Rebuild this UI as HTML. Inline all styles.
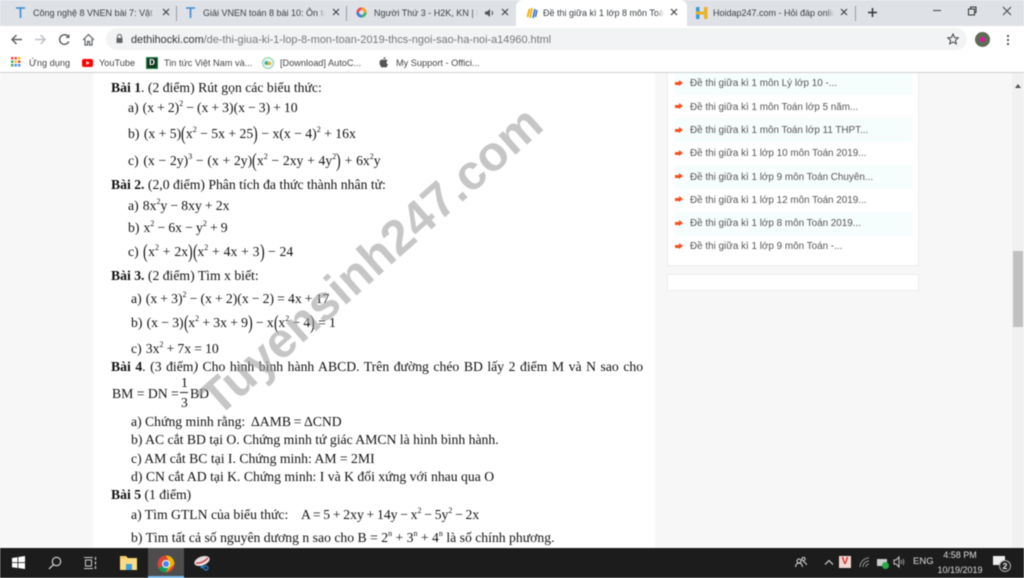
<!DOCTYPE html>
<html><head><meta charset="utf-8"><style>
html,body{margin:0;padding:0;width:1024px;height:578px;overflow:hidden;background:#fff}
#r{position:relative;width:1024px;height:578px;overflow:hidden;filter:blur(.4px);font-family:"Liberation Sans",sans-serif}
.a{position:absolute}
.t{position:absolute;white-space:nowrap;line-height:16px}
.tab{font-size:9px;color:#3c4043;top:5px;height:16px;overflow:hidden;-webkit-mask-image:linear-gradient(90deg,#000 94%,transparent)}
.x{position:absolute;top:8px}
.bm{font-size:9.2px;color:#444;top:55px}
.m{font-family:"Liberation Serif",serif;font-size:13.7px;color:#111;line-height:18px;position:absolute;white-space:nowrap}
.m sup{font-size:8px;line-height:0;vertical-align:6px}
.m i{font-style:normal;font-size:20px;line-height:0;font-weight:300;vertical-align:-2px;display:inline-block;transform:scaleX(.7);margin:0 -1px}
.m u{text-decoration:none;display:inline-block;width:1px}
.s{position:absolute;left:690px;font-size:9.9px;color:#555;white-space:nowrap;line-height:14px}
.ar{position:absolute;left:675px;width:5px;height:3px;background:#f4511e}
.ar:after{content:"";position:absolute;left:4px;top:-2px;border-left:4px solid #f4511e;border-top:3.5px solid transparent;border-bottom:3.5px solid transparent}
.st{position:absolute;left:675px;width:237px;height:24px;background:#f6fdfd}
</style></head><body><div id="r">

<div class="a" style="left:0;top:0;width:1024px;height:26px;background:#dee1e6"></div>
<div class="a" style="left:516px;top:0;width:171px;height:26px;background:#fff;border-radius:7px 7px 0 0"></div>

<svg class="a" style="left:15px;top:7px" width="11" height="11" viewBox="0 0 11 11"><path d="M1 1h9M5.500 1v10" stroke="#3b8bd0" stroke-width="1.600" fill="none"/></svg>
<span class="t tab" style="left:33px;width:122px">Công nghệ 8 VNEN bài 7: Vật lí</span>
<svg class="a x" style="left:162px" width="8" height="8" viewBox="0 0 8 8"><path d="M1 1l6 6M7 1l-6 6" stroke="#444" stroke-width="1.200"/></svg>
<div class="a" style="left:176px;top:6px;width:1px;height:15px;background:#9a9ea3"></div>
<svg class="a" style="left:185px;top:7px" width="11" height="11" viewBox="0 0 11 11"><path d="M1 1h9M5.500 1v10" stroke="#3b8bd0" stroke-width="1.600" fill="none"/></svg>
<span class="t tab" style="left:203px;width:122px">Giải VNEN toán 8 bài 10: Ôn tập</span>
<svg class="a x" style="left:332px" width="8" height="8" viewBox="0 0 8 8"><path d="M1 1l6 6M7 1l-6 6" stroke="#444" stroke-width="1.200"/></svg>
<div class="a" style="left:346px;top:6px;width:1px;height:15px;background:#9a9ea3"></div>
<svg class="a" style="left:356px;top:7px" width="11" height="11" viewBox="0 0 11 11"><circle cx="5.500" cy="5.500" r="3.800" fill="none" stroke="#e8475a" stroke-width="2.600"/><path d="M5.500 1.700a3.800 3.800 0 0 1 3.800 3.800" fill="none" stroke="#f4a62a" stroke-width="2.600"/><path d="M9.300 5.500a3.800 3.800 0 0 1-3.800 3.800" fill="none" stroke="#3fb56a" stroke-width="2.600"/><path d="M5.500 9.300a3.800 3.800 0 0 1-3.800-3.800" fill="none" stroke="#3a7be0" stroke-width="2.600"/></svg>
<span class="t tab" style="left:374px;width:104px">Người Thứ 3 - H2K, KN | Bá</span>
<svg class="a" style="left:484px;top:8px" width="11" height="10" viewBox="0 0 11 10"><path d="M1 3.500h2L6 1v8L3 6.500H1z" fill="#555"/><path d="M8 3q1 2 0 4" fill="none" stroke="#555"/></svg>
<svg class="a x" style="left:501px" width="8" height="8" viewBox="0 0 8 8"><path d="M1 1l6 6M7 1l-6 6" stroke="#444" stroke-width="1.200"/></svg>

<svg class="a" style="left:526px;top:7px" width="13" height="12" viewBox="0 0 13 12"><path d="M1.500 10L3.500 2" stroke="#f2a900" stroke-width="1.800"/><path d="M4 11L6 1" stroke="#f4b400" stroke-width="1.800"/><path d="M7 11L9 2" stroke="#3a7be0" stroke-width="1.800"/><path d="M9.500 10L11 3" stroke="#2e63c0" stroke-width="1.400"/></svg>
<span class="t tab" style="left:543px;width:121px">Đề thi giữa kì 1 lớp 8 môn Toán</span>
<svg class="a x" style="left:670px" width="8" height="8" viewBox="0 0 8 8"><path d="M1 1l6 6M7 1l-6 6" stroke="#444" stroke-width="1.200"/></svg>
<svg class="a" style="left:696px;top:7px" width="12" height="12" viewBox="0 0 12 12"><rect x="0" y="0" width="3.500" height="12" fill="#3a9bd8"/><rect x="8" y="0" width="3.500" height="12" fill="#e8b325"/><rect x="0" y="4.500" width="11" height="3" fill="#e8b325"/></svg>
<span class="t tab" style="left:713px;width:121px">Hoidap247.com - Hỏi đáp online</span>
<svg class="a x" style="left:840px" width="8" height="8" viewBox="0 0 8 8"><path d="M1 1l6 6M7 1l-6 6" stroke="#444" stroke-width="1.200"/></svg>
<div class="a" style="left:855px;top:6px;width:1px;height:15px;background:#9a9ea3"></div>
<svg class="a" style="left:867px;top:7px" width="11" height="11" viewBox="0 0 11 11"><path d="M5.500 1v9M1 5.500h9" stroke="#333" stroke-width="1.500"/></svg>
<div class="a" style="left:933px;top:10px;width:8px;height:1px;background:#444"></div>
<svg class="a" style="left:967px;top:6px" width="10" height="10" viewBox="0 0 10 10"><path d="M1.500 3h6v6h-6zM3.500 3V1h5.500v5.500H7.500" fill="none" stroke="#333"/></svg>
<svg class="a" style="left:1002px;top:6px" width="10" height="10" viewBox="0 0 10 10"><path d="M1 1l8 8M9 1l-8 8" stroke="#444"/></svg>

<div class="a" style="left:0;top:26px;width:1024px;height:47px;background:#fff"></div>
<svg class="a" style="left:10px;top:33px" width="13" height="13" viewBox="0 0 13 13"><path d="M12 6.500H2M6.500 2L2 6.500 6.500 11" fill="none" stroke="#5f6368" stroke-width="1.500"/></svg>
<svg class="a" style="left:34px;top:33px" width="13" height="13" viewBox="0 0 13 13"><path d="M1 6.500h10M6.500 2L11 6.500 6.500 11" fill="none" stroke="#bdc1c6" stroke-width="1.500"/></svg>
<svg class="a" style="left:58px;top:33px" width="13" height="13" viewBox="0 0 13 13"><path d="M10.800 8.500A4.800 4.800 0 1 1 10.500 4" fill="none" stroke="#5f6368" stroke-width="1.500"/><path d="M11.500 1v4h-4z" fill="#5f6368"/></svg>
<svg class="a" style="left:82px;top:33px" width="13" height="13" viewBox="0 0 13 13"><path d="M1 7l5.500-5.500L12 7M3 6v6h2.500V8.500h2V12H10V6" fill="none" stroke="#5f6368" stroke-width="1.200"/></svg>
<div class="a" style="left:106px;top:28px;width:861px;height:22px;background:#f1f3f4;border-radius:11px"></div>
<svg class="a" style="left:115px;top:34px" width="9" height="10" viewBox="0 0 9 10"><path d="M2.500 4V2.500a2 2 0 0 1 4 0V4" fill="none" stroke="#5f6368"/><rect x="1.500" y="4" width="6" height="5" fill="#5f6368"/></svg>
<span class="t" style="left:131px;top:32px;font-size:10.9px;color:#777"><span style="color:#333">dethihocki.com</span>/de-thi-giua-ki-1-lop-8-mon-toan-2019-thcs-ngoi-sao-ha-noi-a14960.html</span>
<svg class="a" style="left:947px;top:33px" width="12" height="12" viewBox="0 0 24 24"><path d="M12 2l3 7 7.500.6-5.700 4.900 1.800 7.300L12 18l-6.600 3.800 1.800-7.300L1.500 9.600 9 9z" fill="none" stroke="#444" stroke-width="2"/></svg>
<div class="a" style="left:975px;top:32px;width:15px;height:15px;border-radius:50%;background:#5f6b55"></div>
<div class="a" style="left:980px;top:37px;width:5px;height:5px;border-radius:50%;background:#e812a8"></div>
<div class="a" style="left:1007px;top:35px;width:2px;height:2px;background:#555;box-shadow:0 4px #555,0 8px #555"></div>

<svg class="a" style="left:11px;top:57px" width="10" height="10" viewBox="0 0 10 10"><g><rect x="0" y="0" width="2.400" height="2.400" fill="#ea4335"/><rect x="3.500" y="0" width="2.400" height="2.400" fill="#ea4335"/><rect x="7" y="0" width="2.400" height="2.400" fill="#fbbc05"/><rect x="0" y="3.500" width="2.400" height="2.400" fill="#34a853"/><rect x="3.500" y="3.500" width="2.400" height="2.400" fill="#fbbc05"/><rect x="7" y="3.500" width="2.400" height="2.400" fill="#ea4335"/><rect x="0" y="7" width="2.400" height="2.400" fill="#34a853"/><rect x="3.500" y="7" width="2.400" height="2.400" fill="#4285f4"/><rect x="7" y="7" width="2.400" height="2.400" fill="#4285f4"/></g></svg>
<span class="t bm" style="left:29px">Ứng dụng</span>
<svg class="a" style="left:82px;top:59px" width="11" height="8" viewBox="0 0 11 8"><rect width="11" height="8" rx="2" fill="#f00"/><path d="M4.300 2v4l3.400-2z" fill="#fff"/></svg>
<span class="t bm" style="left:99px">YouTube</span>
<div class="a" style="left:146px;top:57px;width:10px;height:10px;background:#12381f;border:1px solid #2a8a4a;color:#fff;font:bold 8px/10px 'Liberation Sans';text-align:center">D</div>
<span class="t bm" style="left:164px">Tin tức Việt Nam và...</span>
<svg class="a" style="left:262px;top:57px" width="12" height="12" viewBox="0 0 12 12"><circle cx="6" cy="6" r="5.500" fill="#e8f6ee" stroke="#8fd0b0"/><circle cx="4.500" cy="6" r="2" fill="#3db0a0"/><circle cx="7.500" cy="6.500" r="1.800" fill="#e8b030"/></svg>
<span class="t bm" style="left:280px">[Download] AutoC...</span>
<svg class="a" style="left:379px;top:57px" width="10" height="11" viewBox="0 0 10 11"><path d="M7.500 5.500c0-1.300 1-1.900 1.100-2-.6-.9-1.600-1-1.900-1-.8-.1-1.600.5-2 .5s-1-.5-1.700-.5C2 2.500 .5 3.600 .5 5.800.5 8 2.200 10.500 3.200 10.500c.6 0 .9-.4 1.700-.4s1 .4 1.700.4c1 0 2.100-2 2.400-3-.1 0-1.500-.6-1.500-2zM6 1.700C6.400 1.200 6.600.6 6.500 0 6 0 5.400.3 5 .8c-.3.400-.6 1-.5 1.500.6 0 1.100-.2 1.500-.6z" fill="#555"/></svg>
<span class="t bm" style="left:396px">My Support - Offici...</span>
<div class="a" style="left:0;top:72px;width:1024px;height:1px;background:#d0d0d0"></div>

<div class="a" style="left:0;top:73px;width:1012px;height:475px;background:#f7f7f7"></div>
<div class="a" style="left:93px;top:73px;width:562px;height:475px;background:#fff"></div>
<div class="a" style="left:667px;top:73px;width:252px;height:193px;background:#fff;border:1px solid #eee;border-top:0;box-sizing:border-box"></div>
<div class="a" style="left:667px;top:274px;width:252px;height:17px;background:#fff;border:1px solid #eee;box-sizing:border-box"></div>
<div class="a" style="left:1012px;top:73px;width:12px;height:475px;background:#f1f1f1"></div>
<div class="a" style="left:1013px;top:251px;width:10px;height:76px;background:#c1c1c1"></div>
<div class="a" style="left:1015px;top:84px;border-left:3px solid transparent;border-right:3px solid transparent;border-bottom:4px solid #505050"></div>

<div class="st" style="top:73px;height:22px"></div><div class="st" style="top:118px"></div><div class="st" style="top:165px"></div><div class="st" style="top:212px"></div>
<div class="ar" style="top:82px"></div><span class="s" style="top:77px">Đề thi giữa kì 1 môn Lý lớp 10 -...</span>
<div class="ar" style="top:105px"></div><span class="s" style="top:101px">Đề thi giữa kì 1 môn Toán lớp 5 năm...</span>
<div class="ar" style="top:129px"></div><span class="s" style="top:124px">Đề thi giữa kì 1 môn Toán lớp 11 THPT...</span>
<div class="ar" style="top:152px"></div><span class="s" style="top:147px">Đề thi giữa kì 1 lớp 10 môn Toán 2019...</span>
<div class="ar" style="top:175px"></div><span class="s" style="top:171px">Đề thi giữa kì 1 lớp 9 môn Toán Chuyên...</span>
<div class="ar" style="top:198px"></div><span class="s" style="top:194px">Đề thi giữa kì 1 lớp 12 môn Toán 2019...</span>
<div class="ar" style="top:222px"></div><span class="s" style="top:217px">Đề thi giữa kì 1 lớp 8 môn Toán 2019...</span>
<div class="ar" style="top:245px"></div><span class="s" style="top:240px">Đề thi giữa kì 1 lớp 9 môn Toán -...</span>

<span class="m" style="left:111px;top:79px"><b>Bài 1</b>. (2 điểm) Rút gọn các biểu thức:</span>
<span class="m" style="left:128px;top:99px;word-spacing:-.4px">a)<u></u> (x + 2)<sup>2</sup> − (x + 3)(x − 3) + 10</span>
<span class="m" style="left:128px;top:125px">b)<u></u> (x + 5)<i>(</i>x<sup>2</sup> − 5x + 25<i>)</i> − x(x − 4)<sup>2</sup> + 16x</span>
<span class="m" style="left:128px;top:152px;word-spacing:.3px">c)<u></u> (x − 2y)<sup>3</sup> − (x + 2y)<i>(</i>x<sup>2</sup> − 2xy + 4y<sup>2</sup><i>)</i> + 6x<sup>2</sup>y</span>
<span class="m" style="left:111px;top:176px"><b>Bài 2.</b> (2,0 điểm) Phân tích đa thức thành nhân tử:</span>
<span class="m" style="left:128px;top:197px;word-spacing:-.3px">a)<u></u> 8x<sup>2</sup>y − 8xy + 2x</span>
<span class="m" style="left:128px;top:219px;word-spacing:-.3px">b)<u></u> x<sup>2</sup> − 6x − y<sup>2</sup> + 9</span>
<span class="m" style="left:128px;top:243px;word-spacing:.4px">c)<u></u> <i>(</i>x<sup>2</sup> + 2x<i>)</i><i>(</i>x<sup>2</sup> + 4x + 3<i>)</i> − 24</span>
<span class="m" style="left:111px;top:267px"><b>Bài 3.</b> (2 điểm) Tìm x biết:</span>
<span class="m" style="left:131px;top:290px;word-spacing:-.3px">a)<u></u> (x + 3)<sup>2</sup> − (x + 2)(x − 2) = 4x + 17</span>
<span class="m" style="left:131px;top:314px;word-spacing:-.2px">b)<u></u> (x − 3)<i>(</i>x<sup>2</sup> + 3x + 9<i>)</i> − x<i>(</i>x<sup>2</sup> − 4<i>)</i> = 1</span>
<span class="m" style="left:131px;top:340px;word-spacing:-.3px">c)<u></u> 3x<sup>2</sup> + 7x = 10</span>
<span class="m" style="left:111px;top:358px;word-spacing:1.120px"><b>Bài 4</b>. (3 điểm<em>)</em> Cho hình bình hành ABCD. Trên đường chéo BD lấy 2 điểm M và N sao cho</span>
<span class="m" style="left:112px;top:385px">BM = DN =</span>
<span class="m" style="left:181px;top:375px;line-height:16px">1</span>
<div class="a" style="left:180px;top:392px;width:8px;height:1px;background:#222"></div>
<span class="m" style="left:181px;top:395px;line-height:16px">3</span>
<span class="m" style="left:190px;top:385px">BD</span>
<span class="m" style="left:131px;top:413px">a) Chứng minh rằng:</span><span class="m" style="left:251px;top:413px;word-spacing:-.8px">ΔAMB = ΔCND</span>
<span class="m" style="left:131px;top:431px">b) AC cắt BD tại O. Chứng minh tứ giác AMCN là hình bình hành.</span>
<span class="m" style="left:131px;top:450px">c) AM cắt BC tại I. Chứng minh: AM = 2MI</span>
<span class="m" style="left:131px;top:468px">d) CN cắt AD tại K. Chứng minh: I và K đối xứng với nhau qua O</span>
<span class="m" style="left:111px;top:486px"><b>Bài 5</b> (1 điểm)</span>
<span class="m" style="left:131px;top:506px">a) Tìm GTLN của biểu thức:</span><span class="m" style="left:301px;top:506px;word-spacing:-.7px">A = 5 + 2xy + 14y − x<sup>2</sup> − 5y<sup>2</sup> − 2x</span>
<span class="m" style="left:131px;top:529px">b) Tìm tất cả số nguyên dương n sao cho B = 2<sup>n</sup> + 3<sup>n</sup> + 4<sup>n</sup> là số chính phương.</span>

<svg class="a" style="left:0;top:0" width="1024" height="578" viewBox="0 0 1024 578"><text transform="translate(218,418) rotate(-41.500)" font-family="Liberation Sans" font-weight="bold" font-size="49" fill="rgba(160,160,160,.6)">Tuyensinh247.com</text></svg>

<div class="a" style="left:0;top:548px;width:1024px;height:30px;background:#1c1c1c"></div>
<div class="a" style="left:148px;top:548px;width:36px;height:30px;background:#4d4d4d"></div>
<div class="a" style="left:148px;top:576px;width:36px;height:2px;background:#76b9ed"></div>
<svg class="a" style="left:12px;top:556px" width="13" height="13" viewBox="0 0 13 13"><path d="M0 2l5.500-.8v5H0zM6.300 1l6.700-1v6.200H6.300zM0 7h5.500v5L0 11.200zM6.300 7H13v6l-6.700-1z" fill="#fff"/></svg>
<svg class="a" style="left:48px;top:556px" width="14" height="14" viewBox="0 0 14 14"><circle cx="8.500" cy="5.500" r="4.200" fill="none" stroke="#ddd" stroke-width="1.100"/><path d="M5.500 8.500L1 13" stroke="#ddd" stroke-width="1.200"/></svg>
<svg class="a" style="left:84px;top:557px" width="13" height="12" viewBox="0 0 13 12"><path d="M0 .5h9M0 11.500h9" stroke="#ccc"/><rect x="1.500" y="3" width="6" height="6" fill="none" stroke="#ccc"/><path d="M11.500 0v3M11.500 4.500v3M11.500 9v3" stroke="#ccc" stroke-width="1.200"/></svg>
<svg class="a" style="left:120px;top:555px" width="17" height="15" viewBox="0 0 17 15"><path d="M0 1h6l2 2h9v12H0z" fill="#f5cf6b"/><rect x="0" y="4" width="17" height="11" fill="#fbdc86"/><rect x="6" y="9" width="6" height="6" fill="#3a9fe0"/></svg>
<svg class="a" style="left:157px;top:555px" width="18" height="18" viewBox="0 0 18 18"><circle cx="9" cy="9" r="8.500" fill="#db4437"/><path d="M9 9L1.600 13.300A8.500 8.500 0 0 0 9 17.500L13 9z" fill="#0f9d58"/><path d="M9 .5a8.500 8.500 0 0 1 7.500 4.500L17.500 9 9 17.500 13 9z" fill="#f4b400"/><circle cx="9" cy="9" r="4" fill="#fff"/><circle cx="9" cy="9" r="3" fill="#4285f4"/></svg>
<svg class="a" style="left:194px;top:555px" width="18" height="16" viewBox="0 0 18 16"><ellipse cx="8" cy="6" rx="8" ry="4.500" fill="#e8dcdc" transform="rotate(-20 8 6)"/><path d="M2 8q6 1 12-5" stroke="#c23b3b" fill="none" stroke-width="1.300"/><circle cx="12" cy="13" r="2" fill="none" stroke="#2a7fd0" stroke-width="1.200"/><circle cx="8" cy="12" r="1.500" fill="#2a7fd0"/></svg>

<svg class="a" style="left:795px;top:556px" width="12" height="12" viewBox="0 0 12 12"><circle cx="4" cy="5" r="2" fill="none" stroke="#ddd"/><path d="M.5 11q.5-4 3.500-4t3.500 4" fill="none" stroke="#ddd"/><circle cx="8.500" cy="3" r="1.600" fill="none" stroke="#ddd"/><path d="M8 6q3 0 3.500 3" fill="none" stroke="#ddd"/></svg>
<svg class="a" style="left:824px;top:559px" width="10" height="6" viewBox="0 0 10 6"><path d="M1 5.500L5 1.500l4 4" fill="none" stroke="#ddd" stroke-width="1.100"/></svg>
<div class="a" style="left:839px;top:556px;width:12px;height:12px;background:#f2d8d4;color:#d22;font:bold 10px/12px 'Liberation Sans';text-align:center">V</div>
<svg class="a" style="left:859px;top:557px" width="12" height="11" viewBox="0 0 12 11"><path d="M1 10A9 9 0 0 1 10 1M4 10a6 6 0 0 1 6-6M7 10a3 3 0 0 1 3-3" fill="none" stroke="#999"/></svg>
<div class="a" style="left:877px;top:559px;width:10px;height:7px;border:1px solid #ccc;box-sizing:border-box;background:#ccc"></div>
<div class="a" style="left:882px;top:562px;width:7px;height:7px;border-radius:50%;background:#2aa84a"></div>
<svg class="a" style="left:893px;top:556px" width="13" height="12" viewBox="0 0 13 12"><path d="M1 4h2l3-3v10L3 8H1z" fill="none" stroke="#ccc"/><path d="M8 4q1 2 0 4M10 3q1.500 3 0 6" fill="none" stroke="#999"/></svg>
<span class="t" style="left:913px;top:554px;font-size:9.500px;color:#ddd">ENG</span>
<span class="t" style="left:935px;top:548px;width:50px;text-align:center;font-size:9px;color:#ddd;line-height:15px">4:58 PM<br>10/19/2019</span>
<svg class="a" style="left:993px;top:555px" width="22" height="18" viewBox="0 0 22 18"><path d="M0 1h12v9H0z" fill="#eee"/><circle cx="12" cy="11" r="5.500" fill="#222" stroke="#aaa"/><text x="12" y="14" font-size="8.500" font-family="Liberation Sans" font-weight="bold" fill="#eee" text-anchor="middle">2</text></svg>
</div></body></html>
